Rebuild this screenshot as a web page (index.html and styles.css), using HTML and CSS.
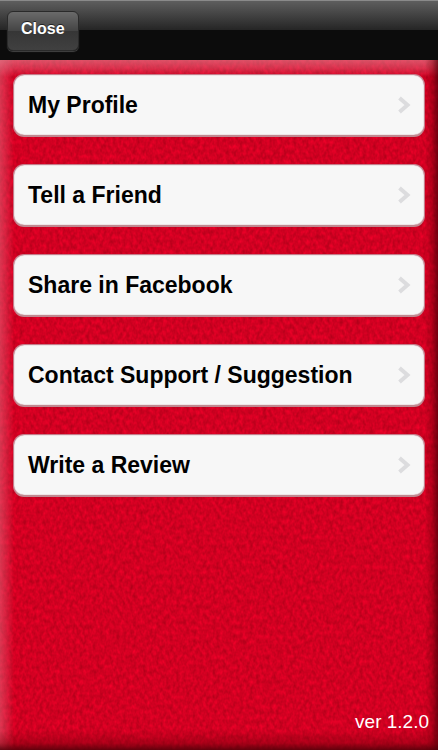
FILE: index.html
```html
<!DOCTYPE html>
<html lang="en">
<head>
    <meta charset="UTF-8">
    <meta name="viewport" content="width=device-width, initial-scale=1.0">
    <title>Settings</title>
    <link rel="stylesheet" href="styles.css">
</head>
<body>
    <header class="navbar">
        <button type="button" class="close-button">Close</button>
    </header>

    <main class="content">
        <!-- Leather grain -->
        <svg class="leather" aria-hidden="true">
            <filter id="grain" x="0" y="0" width="100%" height="100%" color-interpolation-filters="sRGB">
                <feTurbulence type="fractalNoise" baseFrequency="0.3 0.2" numOctaves="2" seed="7"/>
                <feColorMatrix values="-0.32 0 0 0 0.98  0 0 0 0 0  -0.08 0 0 0 0.17  0 0 0 0 1"/>
            </filter>
            <rect width="100%" height="100%" filter="url(#grain)"/>
        </svg>

        <nav class="menu">
            <a href="#profile" class="menu-item">
                <span>My Profile</span>
                <svg class="chevron" viewBox="0 0 14 18"><path d="M2.5 2L10.5 9l-8 7"/></svg>
            </a>
            <a href="#friend" class="menu-item">
                <span>Tell a Friend</span>
                <svg class="chevron" viewBox="0 0 14 18"><path d="M2.5 2L10.5 9l-8 7"/></svg>
            </a>
            <a href="#facebook" class="menu-item">
                <span>Share in Facebook</span>
                <svg class="chevron" viewBox="0 0 14 18"><path d="M2.5 2L10.5 9l-8 7"/></svg>
            </a>
            <a href="#support" class="menu-item">
                <span>Contact Support / Suggestion</span>
                <svg class="chevron" viewBox="0 0 14 18"><path d="M2.5 2L10.5 9l-8 7"/></svg>
            </a>
            <a href="#review" class="menu-item">
                <span>Write a Review</span>
                <svg class="chevron" viewBox="0 0 14 18"><path d="M2.5 2L10.5 9l-8 7"/></svg>
            </a>
        </nav>

        <footer class="version">ver 1.2.0</footer>
    </main>
</body>
</html>
```

FILE: styles.css
```css
* {
    box-sizing: border-box;
}

body {
    margin: 0;
    min-height: 100vh;
    display: flex;
    flex-direction: column;
    background: #d40024;
    font-family: "Liberation Sans", Arial, sans-serif;
}

.navbar {
    display: flex;
    align-items: center;
    height: 60px;
    padding: 0 7px;
    background: linear-gradient(#5e5e5e, #242424 50%, #0c0c0c 50%, #0c0c0c);
    border-top: 1px solid #8a8a8a;
}

.close-button {
    height: 40px;
    padding: 0 13px 4px;
    border: 1px solid #2a2a2a;
    border-radius: 6px;
    background: linear-gradient(#6a6a6a, #444 50%, #363636 50%, #404040);
    box-shadow: 0 1px 1px #444;
    color: #fff;
    font: bold 16px "Liberation Sans", Arial, sans-serif;
    text-shadow: 0 -1px 0 #222;
    cursor: pointer;
}

.content {
    position: relative;
    flex: 1;
    display: flex;
    flex-direction: column;
    padding: 14px 13px 16px;
}

.leather {
    position: absolute;
    inset: 0;
    width: 100%;
    height: 100%;
}

/* Bevelled edges of the leather */
.content::before {
    content: '';
    position: absolute;
    inset: 0;
    background:
        linear-gradient(to top, rgba(80, 0, 8, 0.85), rgba(110, 0, 10, 0.4) 7px, transparent 20px),
        linear-gradient(to left, rgba(80, 0, 8, 0.75), rgba(110, 0, 10, 0.35) 6px, transparent 13px),
        linear-gradient(rgba(225, 125, 140, 0.65), rgba(225, 110, 130, 0.45) 8px, transparent 17px),
        linear-gradient(to right, rgba(225, 100, 120, 0.55), rgba(220, 80, 105, 0.35) 7px, transparent 14px);
    z-index: 1;
}

.menu {
    position: relative;
    z-index: 2;
    display: flex;
    flex-direction: column;
    gap: 27px;
}

.menu-item {
    display: flex;
    align-items: center;
    justify-content: space-between;
    height: 63px;
    padding: 0 13px 0 14px;
    border: 1px solid #c47c8a;
    border-bottom: 2px solid #c08890;
    border-radius: 11px;
    background: #f7f7f7;
    box-shadow: inset 0 0 1px #a04858;
    color: #000;
    font-size: 23px;
    font-weight: bold;
    text-decoration: none;
}

.chevron {
    width: 14px;
    height: 18px;
    fill: none;
    stroke: #dcdcde;
    stroke-width: 4;
}

.version {
    position: relative;
    z-index: 2;
    margin-top: auto;
    margin-right: -4px;
    color: #fff;
    font-size: 19px;
    line-height: 24px;
    text-align: right;
}
```
